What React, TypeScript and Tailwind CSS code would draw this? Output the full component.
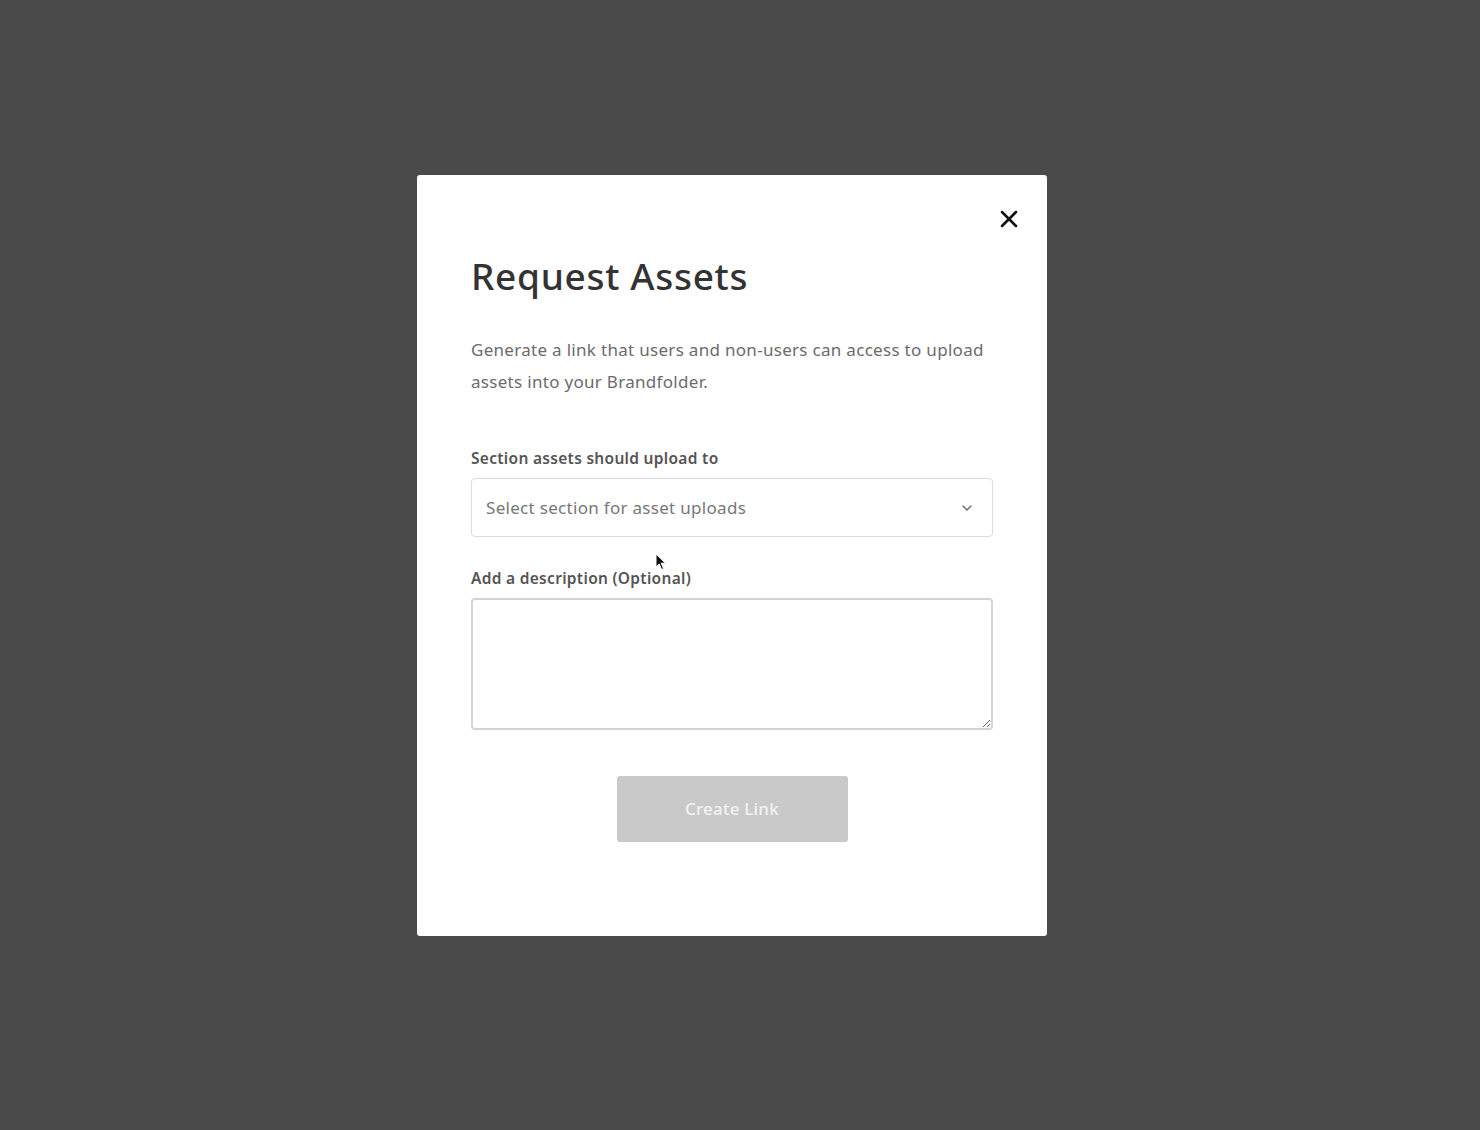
import { ChevronDown, X } from "lucide-react";

export default function App() {
  return (
    <div
      className="relative flex h-[1130px] w-full items-start justify-center bg-[#4a4a4a] pt-[175px] pr-[16px]"
      style={{ fontFamily: '"Noto Sans", "Liberation Sans", sans-serif' }}
    >
      <div className="relative w-[630px] rounded-[3px] bg-white px-[54px] pt-[79px] pb-[94px]">
        <button className="absolute right-[24px] top-[30px] text-[#111]">
          <X className="h-[28px] w-[28px]" strokeWidth={2.2} />
        </button>

        <h1 className="text-[37px] font-medium leading-[44px] tracking-[0.7px] text-[#333]">
          Request Assets
        </h1>

        <p className="mt-[36px] text-[17px] leading-[32px] tracking-[0.3px] text-[#6b6b6b]">
          Generate a link that users and non-users can access to upload
          assets into your Brandfolder.
        </p>

        <label className="mt-[50px] block text-[15.5px] font-semibold leading-[20px] tracking-[0.3px] text-[#555]">
          Section assets should upload to
        </label>
        <div className="mt-[10px] flex h-[59px] items-center justify-between rounded-[4px] border border-[#dcdcdc] pl-[14px] pr-[17px]">
          <span className="text-[17px] tracking-[0.3px] text-[#777]">Select section for asset uploads</span>
          <ChevronDown className="h-[16px] w-[16px] text-[#666]" strokeWidth={2} />
        </div>

        <label className="mt-[31px] block text-[15.5px] font-semibold leading-[20px] tracking-[0.3px] text-[#555]">
          Add a description (Optional)
        </label>
        <textarea className="mt-[10px] block h-[132px] w-full resize-y rounded-[4px] border-2 border-[#d4d4d4] bg-white p-3 outline-none" />

        <div className="mt-[46px] flex justify-center">
          <button className="h-[66px] w-[231px] rounded-[3px] bg-[#c9c9c9] text-[17px] font-medium tracking-[0.2px] text-[#f2f2f2]">
            Create Link
          </button>
        </div>

        <svg
          className="absolute left-[238px] top-[378px]"
          width="12"
          height="18"
          viewBox="0 0 12 18"
        >
          <path d="M1 1 L1 14 L4.2 11 L6.6 16.5 L8.6 15.6 L6.2 10.2 L10.5 10.2 Z" fill="#111" stroke="#fff" strokeWidth="1" />
        </svg>
      </div>
    </div>
  );
}
